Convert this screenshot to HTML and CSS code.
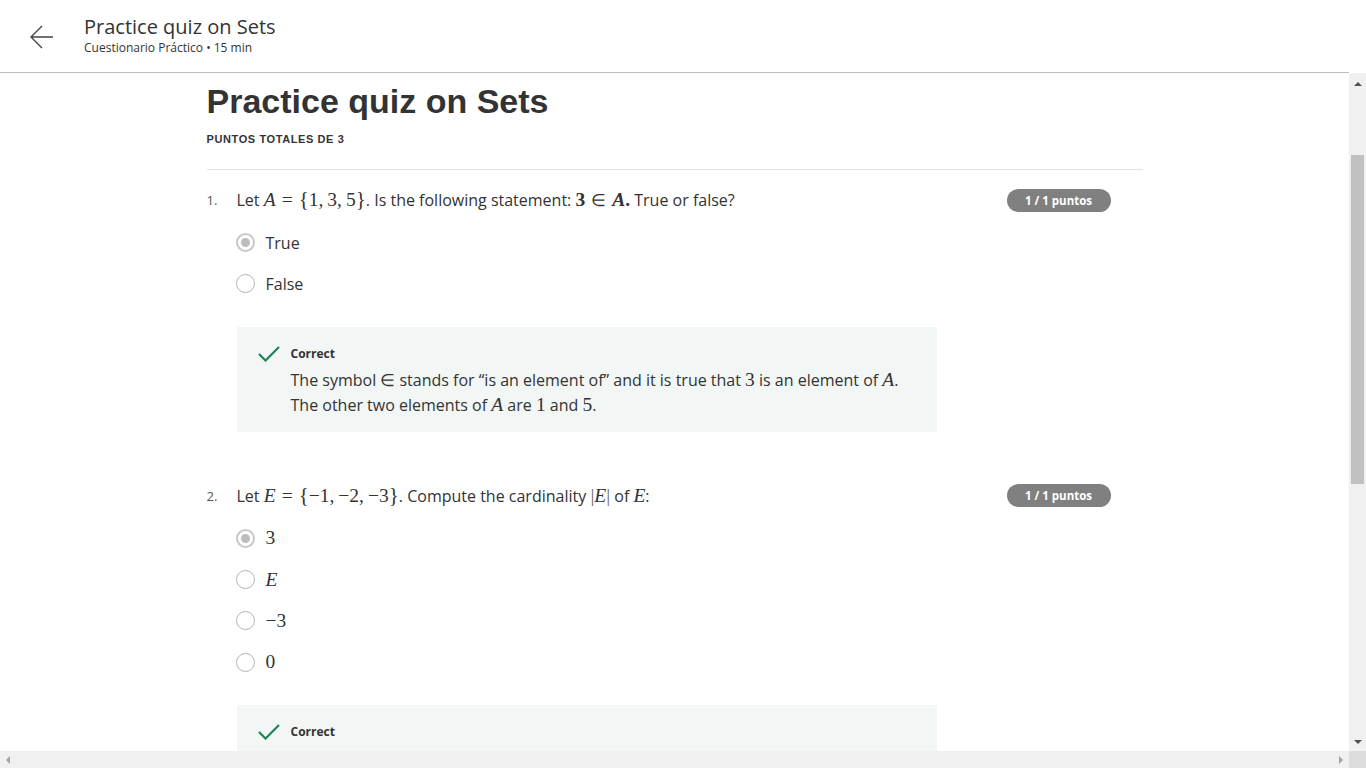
FILE: index.html
```html
<!DOCTYPE html>
<html lang="es">
<head>
<meta charset="utf-8">
<title>Practice quiz on Sets</title>
<link rel="stylesheet" href="styles.css">
</head>
<body>
<div class="app">
  <header class="topbar">
    <div class="topbar-inner">
      <button class="back" aria-label="Back">
        <svg width="26" height="26" viewBox="0 0 26 26"><path d="M24 13H2M13 2L2 13l11 11" fill="none" stroke="#444" stroke-width="1.4"/></svg>
      </button>
      <div class="titles">
        <div class="top-title">Practice quiz on Sets</div>
        <div class="top-sub">Cuestionario Práctico • 15 min</div>
      </div>
    </div>
  </header>
  <div class="middle">
    <main class="content">
      <div class="column">
        <h1 class="quiz-title">Practice quiz on Sets</h1>
        <div class="total">PUNTOS TOTALES DE 3</div>
        <div class="divider"></div>

        <section class="question">
          <div class="q-head">
            <span class="q-num">1.</span>
            <div class="q-text">Let <span class="m"><i>A</i><span class="op">=</span><span class="br">{</span>1,<span class="th"></span>3,<span class="th"></span>5<span class="br">}</span></span>. Is the following statement: <span class="m b">3<span class="op in">∈</span><i>A</i>.</span> True or false?</div>
            <span class="badge">1 / 1 puntos</span>
          </div>
          <ul class="options">
            <li class="opt"><span class="radio on"></span><span class="opt-label">True</span></li>
            <li class="opt"><span class="radio"></span><span class="opt-label">False</span></li>
          </ul>
          <div class="feedback">
            <div class="fb-head">
              <svg class="check" width="22" height="16" viewBox="0 0 22 16"><path d="M1 8l6.5 6.5L21 1" fill="none" stroke="#1f8354" stroke-width="2.2"/></svg>
              <span class="fb-title">Correct</span>
            </div>
            <p class="fb-text">The symbol <span class="m in">∈</span> stands for “is an element of” and it is true that <span class="m">3</span> is an element of <span class="m"><i>A</i></span>.<br>The other two elements of <span class="m"><i>A</i></span> are <span class="m">1</span> and <span class="m">5</span>.</p>
          </div>
        </section>

        <section class="question">
          <div class="q-head">
            <span class="q-num">2.</span>
            <div class="q-text">Let <span class="m"><i>E</i><span class="op">=</span><span class="br">{</span>−1,<span class="th"></span>−2,<span class="th"></span>−3<span class="br">}</span></span>. Compute the cardinality <span class="m"><span class="bar">|</span><i>E</i><span class="bar">|</span></span> of <span class="m"><i>E</i></span>:</div>
            <span class="badge">1 / 1 puntos</span>
          </div>
          <ul class="options">
            <li class="opt"><span class="radio on"></span><span class="opt-label m">3</span></li>
            <li class="opt"><span class="radio"></span><span class="opt-label m"><i>E</i></span></li>
            <li class="opt"><span class="radio"></span><span class="opt-label m">−3</span></li>
            <li class="opt"><span class="radio"></span><span class="opt-label m">0</span></li>
          </ul>
          <div class="feedback">
            <div class="fb-head">
              <svg class="check" width="22" height="16" viewBox="0 0 22 16"><path d="M1 8l6.5 6.5L21 1" fill="none" stroke="#1f8354" stroke-width="2.2"/></svg>
              <span class="fb-title">Correct</span>
            </div>
          </div>
        </section>
      </div>
    </main>
    <div class="vbar">
      <span class="arrow up"></span>
      <div class="vtrack"><div class="vthumb"></div></div>
      <span class="arrow down"></span>
    </div>
  </div>
  <div class="hbar">
    <div class="htrack">
      <span class="arrow left"></span>
      <span class="arrow right"></span>
    </div>
    <div class="corner"></div>
  </div>
</div>
</body>
</html>
```

FILE: styles.css
```css
* { box-sizing: border-box; }
html, body { margin: 0; padding: 0; height: 100%; overflow: hidden; }
body { background: #fff; color: #333; font-family: "Open Sans", "Liberation Sans", sans-serif; }

.app { display: flex; flex-direction: column; height: 768px; }

.topbar { height: 73px; flex: none; }
.topbar-inner {
  height: 73px; margin-right: 17px; border-bottom: 1px solid #bdbdbd;
  display: flex; align-items: center; padding-left: 29px;
}
.back { background: none; border: 0; padding: 0; width: 26px; height: 26px; margin-top: 1px; cursor: pointer; }
.back svg { display: block; }
.titles { margin-left: 29px; display: flex; flex-direction: column; margin-top: -3px; }
.top-title { font-size: 20px; line-height: 26px; color: #333; }
.top-sub { font-size: 12px; line-height: 16px; color: #333; }

.middle { flex: 1; display: flex; min-height: 0; }
.content { flex: 1; overflow: hidden; }
.column { width: 936px; margin: 0 auto; padding-top: 8px; }

.quiz-title {
  margin: 0; font-family: "Liberation Sans", Arial, sans-serif; font-weight: bold;
  font-size: 34px; line-height: 40px; color: #333;
}
.total {
  margin-top: 10px; font-family: "Liberation Sans", Arial, sans-serif; font-weight: bold;
  font-size: 11px; line-height: 16px; letter-spacing: 0.6px; color: #333;
}
.divider { height: 1px; background: #e1e1e1; margin-top: 22px; }

.question { padding-right: 32px; }
.question:first-of-type { margin-top: 18px; }
.question + .question { margin-top: 52px; }

.q-head { display: flex; align-items: center; height: 24px; }
.q-num { width: 30px; flex: none; font-size: 13px; color: #555; }
.q-text { flex: 1; font-size: 16px; line-height: 24px; color: #333; white-space: nowrap; }
.badge {
  flex: none; width: 104px; height: 23px; border-radius: 12px; background: #808080;
  color: #fff; font-size: 11.5px; font-weight: bold; line-height: 23px; text-align: center;
}

.m { font-family: "Liberation Serif", "Times New Roman", serif; font-size: 19.5px; line-height: 1; }
.m i { font-style: italic; }
.m.b { font-weight: bold; }
.in { font-family: "DejaVu Sans", sans-serif; font-weight: 200; font-size: 17px; }
.op { margin: 0 6px; }
.br { font-size: 21px; }
.th { display: inline-block; width: 4px; }
.bar { color: #666; }

.options { list-style: none; margin: 10px 0 0; padding: 0 0 0 29px; }
.opt { height: 41.3px; display: flex; align-items: center; }
.radio {
  width: 19px; height: 19px; border-radius: 50%; border: 1.5px solid #b5b5b5;
  flex: none; position: relative; background: #fff;
}
.radio.on { border: 2px solid #c9c9c9; }
.radio.on::after {
  content: ""; position: absolute; left: 50%; top: 50%; width: 9px; height: 9px;
  margin: -4.5px 0 0 -4.5px; border-radius: 50%; background: #bdbdbd;
}
.opt-label { margin-left: 11px; font-size: 16px; color: #333; }
.opt-label.m { font-size: 19.5px; }

.feedback {
  margin: 22px 0 0 30px; width: 700px; background: #f2f7f5;
  padding: 18px 20px 14px 21px;
}
.fb-head { display: flex; align-items: center; height: 18px; }
.check { display: block; flex: none; }
.fb-title { margin-left: 11px; font-size: 12px; font-weight: bold; color: #333; }
.fb-text { margin: 5px 0 0 33px; font-size: 16px; line-height: 25px; color: #333; }

.vbar { width: 17px; flex: none; background: #f0f0f0; display: flex; flex-direction: column; align-items: center; }
.vtrack { flex: 1; width: 100%; padding: 0 2px; position: relative; }
.vthumb { margin-top: 64px; height: 329px; background: #c1c1c1; }
.arrow { display: block; width: 0; height: 0; flex: none; }
.arrow.up { margin: 9px 0 5px; border-left: 4px solid transparent; border-right: 4px solid transparent; border-bottom: 4px solid #505050; }
.arrow.down { margin: 5px 0 7px; border-left: 4px solid transparent; border-right: 4px solid transparent; border-top: 4px solid #505050; }

.hbar { height: 17px; flex: none; display: flex; }
.htrack { flex: 1; background: #f0f0f0; display: flex; align-items: center; justify-content: space-between; padding: 0 6px; }
.arrow.left { border-top: 4px solid transparent; border-bottom: 4px solid transparent; border-right: 4px solid #a3a3a3; }
.arrow.right { border-top: 4px solid transparent; border-bottom: 4px solid transparent; border-left: 4px solid #a3a3a3; }
.corner { width: 17px; background: #dcdcdc; }
```
